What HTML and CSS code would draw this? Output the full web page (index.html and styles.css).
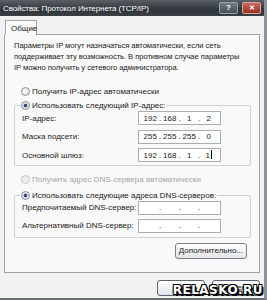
FILE: index.html
```html
<!DOCTYPE html>
<html>
<head>
    <title>Свойства: Протокол Интернета (TCP/IP)</title>
    <link rel="stylesheet" href="styles.css">
</head>
<body>
    <div class="window">
        <div class="titlebar">
            <span class="title">Свойства: Протокол Интернета (TCP/IP)</span>
            <span class="tb-btn help">?</span>
            <span class="tb-btn close">✕</span>
        </div>

        <div class="body">
            <div class="tabs">
                <span class="tab">Общие</span>
                <span class="tab-rest"></span>
            </div>

            <div class="panel">
                <p class="intro">Параметры IP могут назначаться автоматически, если сеть поддерживает эту возможность. В противном случае параметры IP можно получить у сетевого администратора.</p>

                <div class="radio-row first">
                    <span class="radio"></span>
                    <span>Получить IP-адрес автоматически</span>
                </div>

                <fieldset class="group ip-group">
                    <legend class="radio-row">
                        <span class="radio checked"></span>
                        <span>Использовать следующий IP-адрес:</span>
                    </legend>
                    <div class="field">
                        <span class="label">IP-адрес:</span>
                        <span class="ip"><b>192</b><i>.</i><b>168</b><i>.</i><b>1</b><i>.</i><b>2</b></span>
                    </div>
                    <div class="field">
                        <span class="label">Маска подсети:</span>
                        <span class="ip"><b>255</b><i>.</i><b>255</b><i>.</i><b>255</b><i>.</i><b>0</b></span>
                    </div>
                    <div class="field">
                        <span class="label">Основной шлюз:</span>
                        <span class="ip"><b>192</b><i>.</i><b>168</b><i>.</i><b>1</b><i>.</i><b class="caret">1</b></span>
                    </div>
                </fieldset>

                <div class="radio-row disabled">
                    <span class="radio"></span>
                    <span>Получить адрес DNS-сервера автоматически</span>
                </div>

                <fieldset class="group dns-group">
                    <legend class="radio-row">
                        <span class="radio checked"></span>
                        <span>Использовать следующие адреса DNS-серверов:</span>
                    </legend>
                    <div class="field">
                        <span class="label">Предпочитаемый DNS-сервер:</span>
                        <span class="ip"><b></b><i>.</i><b></b><i>.</i><b></b><i>.</i><b></b></span>
                    </div>
                    <div class="field">
                        <span class="label">Альтернативный DNS-сервер:</span>
                        <span class="ip"><b></b><i>.</i><b></b><i>.</i><b></b><i>.</i><b></b></span>
                    </div>
                </fieldset>

                <div class="advanced-row">
                    <span class="button">Дополнительно...</span>
                </div>
            </div>

            <div class="footer">
                <span class="button wide">OK</span>
                <span class="button wide">Отмена</span>
            </div>
        </div>

        <span class="watermark">RELASKO.RU</span>
    </div>
</body>
</html>
```

FILE: styles.css
```css
body {
    margin: 0;
    font-family: "Liberation Sans", Arial, sans-serif;
    font-size: 8px;
    color: #1a1a1a;
}
.window {
    position: relative;
    width: 267px;
    height: 300px;
    background-color: #f1f1f1;
    box-sizing: border-box;
    border-bottom: 2px solid #6b7178;
    border-right: 3px solid #8d959c;
    overflow: hidden;
}
/* Title bar */
.titlebar {
    height: 16px;
    display: flex;
    align-items: center;
    padding: 0 3px 0 3px;
    background: linear-gradient(#5a6066, #2f3439 60%, #3a3f45);
    color: #ffffff;
}
.title {
    flex: 1;
    font-size: 8px;
    letter-spacing: -0.1px;
}
.tb-btn {
    width: 17px;
    height: 10px;
    margin-left: 4px;
    border: 1px solid #9aa3aa;
    border-radius: 2px;
    font-size: 8px;
    line-height: 10px;
    text-align: center;
    font-weight: bold;
}
.help {
    background: linear-gradient(#6e7a84, #46515a);
}
.close {
    background: linear-gradient(#c96a5c, #9a2f22);
    border-color: #d9a59c;
    font-size: 7px;
}
.body {
    padding: 4px 4px 0 4px;
}
/* Tabs */
.tabs {
    display: flex;
    height: 15px;
}
.tab {
    width: 32px;
    padding-left: 5px;
    box-sizing: border-box;
    border: 1px solid #9ea3a7;
    border-bottom: none;
    background-color: #fbfbfb;
    line-height: 15px;
    margin-left: 1px;
}
.tab-rest {
    flex: 1;
    border-bottom: 1px solid #9ea3a7;
}
.panel {
    height: 238px;
    box-sizing: border-box;
    border: 1px solid #9ea3a7;
    border-top: none;
    background-color: #f9f9f9;
    padding: 5px 10px 0 9px;
}
.intro {
    margin: 0;
    line-height: 11px;
    max-width: 226px;
    font-size: 7.6px;
    letter-spacing: -0.05px;
}
/* Radio buttons */
.radio-row {
    display: flex;
    align-items: center;
    gap: 2px;
    height: 12px;
}
.radio-row.first {
    margin: 12px 0 2px 7px;
}
.radio {
    width: 7px;
    height: 7px;
    border: 1px solid #8a9096;
    border-radius: 50%;
    background: radial-gradient(#ffffff, #d5d9dd);
}
.radio.checked {
    background: radial-gradient(#3d4a86 35%, #e8eaf0 45%, #cdd2d8);
}
.radio-row.disabled {
    color: #a5a5a5;
    margin: 8px 0 4px 7px;
}
.radio-row.disabled .radio {
    border-color: #c2c5c8;
    background: #eeeeee;
}
/* Group boxes */
.group {
    margin: 0;
    padding: 0 0 0 7px;
    width: 237px;
    box-sizing: border-box;
    border: 1px solid #cfd2d5;
    border-radius: 2px;
}
.group legend {
    padding: 0 1px;
    margin-left: -2px;
}
.ip-group legend {
    margin-bottom: -2px;
}
.dns-group legend {
    margin-bottom: -3px;
}
.field {
    display: flex;
    align-items: center;
    height: 18.5px;
}
.label {
    width: 116px;
}
.ip {
    display: flex;
    width: 83px;
    height: 14px;
    box-sizing: border-box;
    border: 1px solid #a7adb3;
    background-color: #ffffff;
    align-items: center;
    padding: 0 3px;
}
.ip b {
    flex: 1;
    font-weight: normal;
    text-align: center;
}
.ip i {
    font-style: normal;
    width: 3px;
    text-align: center;
}
.caret::after {
    content: "";
    display: inline-block;
    width: 1px;
    height: 9px;
    margin-left: 1px;
    vertical-align: -1px;
    background-color: #000000;
}
.dns-group .field {
    height: 18px;
}
.dns-group {
    padding-bottom: 2px;
}
.advanced-row {
    display: flex;
    justify-content: flex-end;
    padding: 5px 2px 0 0;
}
/* Buttons */
.button {
    height: 16px;
    box-sizing: border-box;
    padding: 0 3px;
    border: 1px solid #7a8087;
    border-radius: 3px;
    background: linear-gradient(#ffffff, #e2e5e8);
    line-height: 14px;
    text-align: center;
}
.footer {
    display: flex;
    justify-content: flex-end;
    gap: 7px;
    padding: 7px 0 0 0;
}
.button.wide {
    width: 48px;
    border-color: #586272;
}
/* Site watermark over the corner */
.watermark {
    position: absolute;
    right: 1px;
    bottom: 1px;
    font-family: "DejaVu Sans", sans-serif;
    font-weight: bold;
    font-size: 12px;
    letter-spacing: 0.5px;
    color: #ffffff;
    text-shadow: -1px -1px 0 #000, 1px -1px 0 #000, -1px 1px 0 #000, 1px 1px 0 #000, 2px 2px 0 #000;
}
```
